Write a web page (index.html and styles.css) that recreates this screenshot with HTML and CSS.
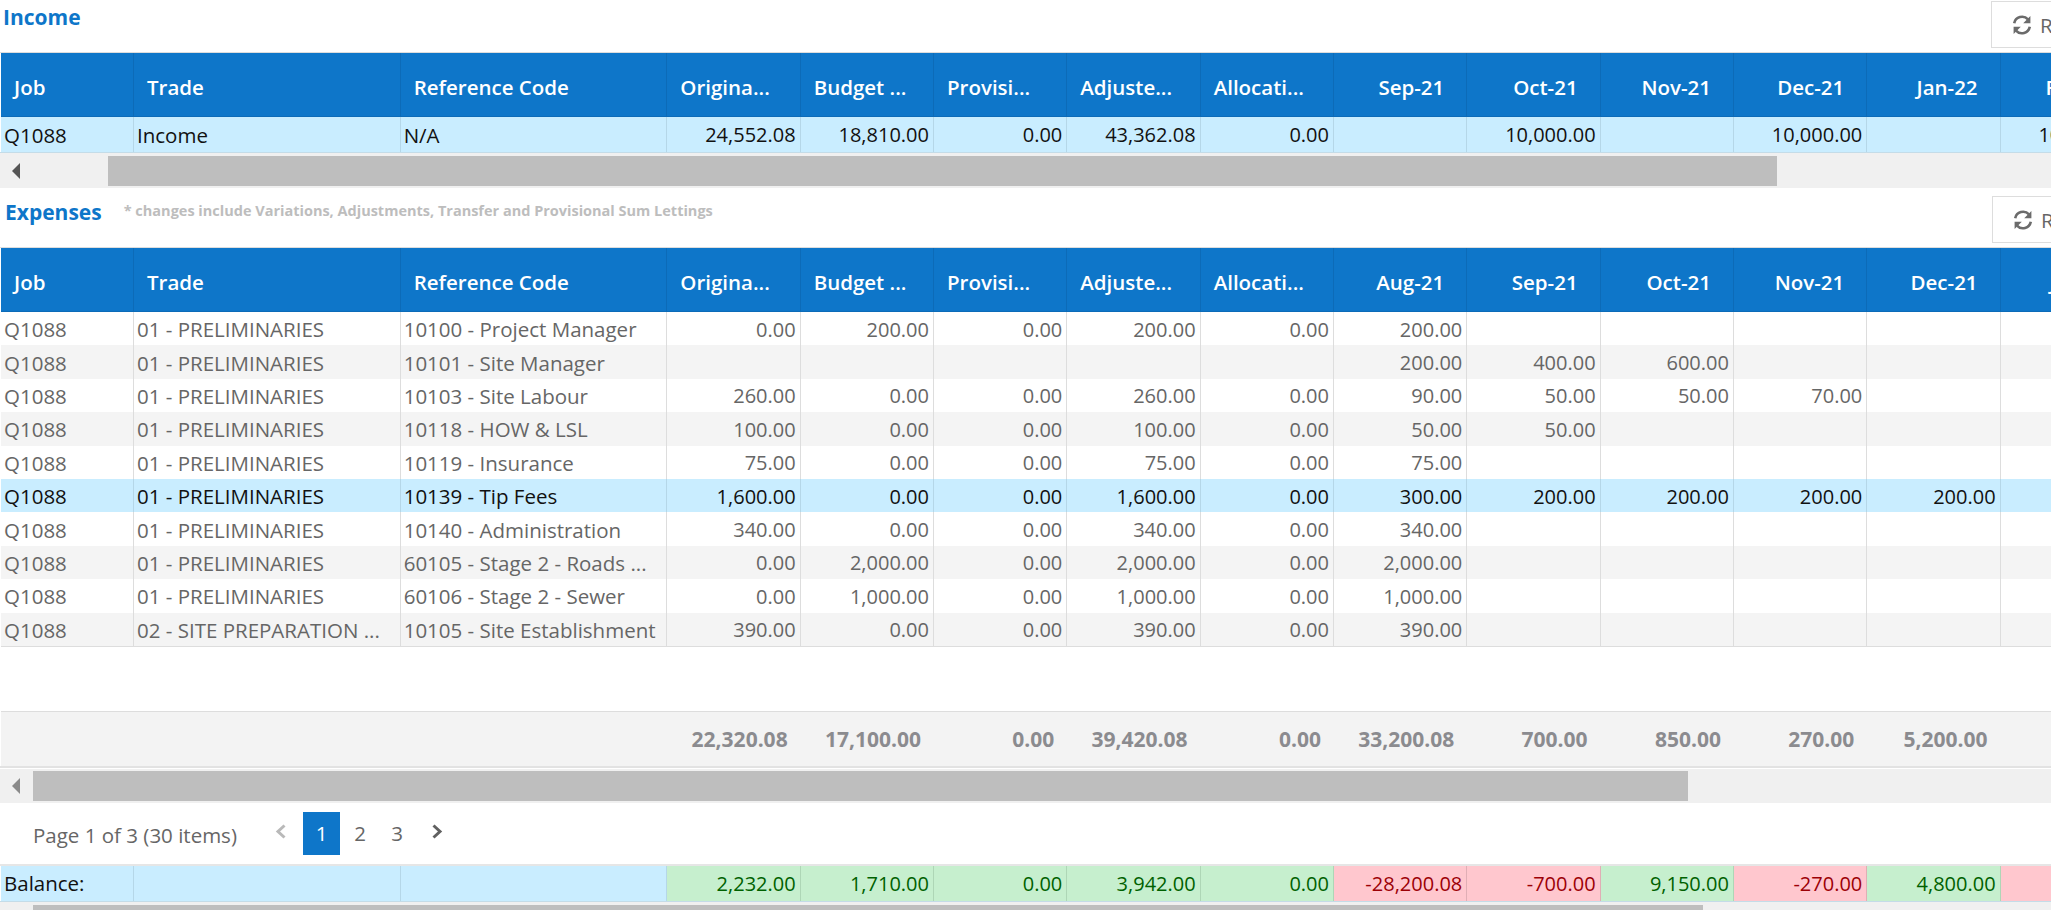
FILE: index.html
```html
<!DOCTYPE html>
<html lang="en">
<head>
<meta charset="utf-8">
<title>Income and Expenses</title>
<link rel="stylesheet" href="styles.css">
</head>
<body>
<section class="panel-head income-head">
  <h2 class="title">Income</h2>
  <button class="refresh" type="button"><svg class="refresh-icon" viewBox="0 0 20 20"><path d="M2.2 8.2A8 8 0 0 1 16 4.4M17.8 11.8A8 8 0 0 1 4 15.6" fill="none" stroke="#6b6b6b" stroke-width="2.6"/><path d="M18.4 1v7.2h-7.2zM1.6 19v-7.2h7.2z" fill="#6b6b6b"/></svg>Refresh</button>
</section>
<div class="grid income-grid">
  <div class="row head">
    <div class="c">Job</div><div class="c">Trade</div><div class="c">Reference Code</div>
    <div class="c">Origina...</div><div class="c">Budget ...</div><div class="c">Provisi...</div><div class="c">Adjuste...</div><div class="c">Allocati...</div>
    <div class="c m">Sep-21</div><div class="c m">Oct-21</div><div class="c m">Nov-21</div><div class="c m">Dec-21</div><div class="c m">Jan-22</div><div class="c m">Feb-22</div>
  </div>
  <div class="row sel tall">
    <div class="c">Q1088</div><div class="c">Income</div><div class="c">N/A</div>
    <div class="c n">24,552.08</div><div class="c n">18,810.00</div><div class="c n">0.00</div><div class="c n">43,362.08</div><div class="c n">0.00</div>
    <div class="c n"></div><div class="c n">10,000.00</div><div class="c n"></div><div class="c n">10,000.00</div><div class="c n"></div><div class="c n">10,000.00</div>
  </div>
</div>
<div class="track track-income"><svg class="arrow" viewBox="0 0 8 16"><path d="M8 0v16L0 8z" fill="#555"/></svg><div class="thumb thumb-income"></div></div>

<section class="panel-head expense-head">
  <h2 class="title">Expenses</h2>
  <p class="note">* changes include Variations, Adjustments, Transfer and Provisional Sum Lettings</p>
  <button class="refresh" type="button"><svg class="refresh-icon" viewBox="0 0 20 20"><path d="M2.2 8.2A8 8 0 0 1 16 4.4M17.8 11.8A8 8 0 0 1 4 15.6" fill="none" stroke="#6b6b6b" stroke-width="2.6"/><path d="M18.4 1v7.2h-7.2zM1.6 19v-7.2h7.2z" fill="#6b6b6b"/></svg>Refresh</button>
</section>
<div class="grid expense-grid">
  <div class="row head">
    <div class="c">Job</div><div class="c">Trade</div><div class="c">Reference Code</div>
    <div class="c">Origina...</div><div class="c">Budget ...</div><div class="c">Provisi...</div><div class="c">Adjuste...</div><div class="c">Allocati...</div>
    <div class="c m">Aug-21</div><div class="c m">Sep-21</div><div class="c m">Oct-21</div><div class="c m">Nov-21</div><div class="c m">Dec-21</div><div class="c m">Jan-22</div>
  </div>
  <div class="row body">
    <div class="c">Q1088</div><div class="c">01 - PRELIMINARIES</div><div class="c">10100 - Project Manager</div>
    <div class="c n">0.00</div><div class="c n">200.00</div><div class="c n">0.00</div><div class="c n">200.00</div><div class="c n">0.00</div>
    <div class="c n">200.00</div><div class="c n"></div><div class="c n"></div><div class="c n"></div><div class="c n"></div><div class="c n"></div>
  </div>
  <div class="row body alt">
    <div class="c">Q1088</div><div class="c">01 - PRELIMINARIES</div><div class="c">10101 - Site Manager</div>
    <div class="c n"></div><div class="c n"></div><div class="c n"></div><div class="c n"></div><div class="c n"></div>
    <div class="c n">200.00</div><div class="c n">400.00</div><div class="c n">600.00</div><div class="c n"></div><div class="c n"></div><div class="c n"></div>
  </div>
  <div class="row body">
    <div class="c">Q1088</div><div class="c">01 - PRELIMINARIES</div><div class="c">10103 - Site Labour</div>
    <div class="c n">260.00</div><div class="c n">0.00</div><div class="c n">0.00</div><div class="c n">260.00</div><div class="c n">0.00</div>
    <div class="c n">90.00</div><div class="c n">50.00</div><div class="c n">50.00</div><div class="c n">70.00</div><div class="c n"></div><div class="c n"></div>
  </div>
  <div class="row body alt">
    <div class="c">Q1088</div><div class="c">01 - PRELIMINARIES</div><div class="c">10118 - HOW &amp; LSL</div>
    <div class="c n">100.00</div><div class="c n">0.00</div><div class="c n">0.00</div><div class="c n">100.00</div><div class="c n">0.00</div>
    <div class="c n">50.00</div><div class="c n">50.00</div><div class="c n"></div><div class="c n"></div><div class="c n"></div><div class="c n"></div>
  </div>
  <div class="row body">
    <div class="c">Q1088</div><div class="c">01 - PRELIMINARIES</div><div class="c">10119 - Insurance</div>
    <div class="c n">75.00</div><div class="c n">0.00</div><div class="c n">0.00</div><div class="c n">75.00</div><div class="c n">0.00</div>
    <div class="c n">75.00</div><div class="c n"></div><div class="c n"></div><div class="c n"></div><div class="c n"></div><div class="c n"></div>
  </div>
  <div class="row body sel">
    <div class="c">Q1088</div><div class="c">01 - PRELIMINARIES</div><div class="c">10139 - Tip Fees</div>
    <div class="c n">1,600.00</div><div class="c n">0.00</div><div class="c n">0.00</div><div class="c n">1,600.00</div><div class="c n">0.00</div>
    <div class="c n">300.00</div><div class="c n">200.00</div><div class="c n">200.00</div><div class="c n">200.00</div><div class="c n">200.00</div><div class="c n"></div>
  </div>
  <div class="row body">
    <div class="c">Q1088</div><div class="c">01 - PRELIMINARIES</div><div class="c">10140 - Administration</div>
    <div class="c n">340.00</div><div class="c n">0.00</div><div class="c n">0.00</div><div class="c n">340.00</div><div class="c n">0.00</div>
    <div class="c n">340.00</div><div class="c n"></div><div class="c n"></div><div class="c n"></div><div class="c n"></div><div class="c n"></div>
  </div>
  <div class="row body alt">
    <div class="c">Q1088</div><div class="c">01 - PRELIMINARIES</div><div class="c">60105 - Stage 2 - Roads ...</div>
    <div class="c n">0.00</div><div class="c n">2,000.00</div><div class="c n">0.00</div><div class="c n">2,000.00</div><div class="c n">0.00</div>
    <div class="c n">2,000.00</div><div class="c n"></div><div class="c n"></div><div class="c n"></div><div class="c n"></div><div class="c n"></div>
  </div>
  <div class="row body">
    <div class="c">Q1088</div><div class="c">01 - PRELIMINARIES</div><div class="c">60106 - Stage 2 - Sewer</div>
    <div class="c n">0.00</div><div class="c n">1,000.00</div><div class="c n">0.00</div><div class="c n">1,000.00</div><div class="c n">0.00</div>
    <div class="c n">1,000.00</div><div class="c n"></div><div class="c n"></div><div class="c n"></div><div class="c n"></div><div class="c n"></div>
  </div>
  <div class="row body alt">
    <div class="c">Q1088</div><div class="c">02 - SITE PREPARATION ...</div><div class="c">10105 - Site Establishment</div>
    <div class="c n">390.00</div><div class="c n">0.00</div><div class="c n">0.00</div><div class="c n">390.00</div><div class="c n">0.00</div>
    <div class="c n">390.00</div><div class="c n"></div><div class="c n"></div><div class="c n"></div><div class="c n"></div><div class="c n"></div>
  </div>
  <div class="empty"></div>
  <div class="row foot">
    <div class="c"></div><div class="c"></div><div class="c"></div>
    <div class="c n">22,320.08</div><div class="c n">17,100.00</div><div class="c n">0.00</div><div class="c n">39,420.08</div><div class="c n">0.00</div>
    <div class="c n">33,200.08</div><div class="c n">700.00</div><div class="c n">850.00</div><div class="c n">270.00</div><div class="c n">5,200.00</div><div class="c n"></div>
  </div>
</div>
<div class="track track-expense"><svg class="arrow" viewBox="0 0 8 16"><path d="M8 0v16L0 8z" fill="#8a8a8a"/></svg><div class="thumb thumb-expense"></div></div>

<nav class="pager">
  <span class="page-info">Page 1 of 3 (30 items)</span>
  <svg class="chev chev-prev" viewBox="0 0 11 15"><path d="M9.5 1.5 3 7.5l6.5 6" fill="none" stroke="#b9b9b9" stroke-width="3"/></svg>
  <span class="page current">1</span><span class="page">2</span><span class="page">3</span>
  <svg class="chev chev-next" viewBox="0 0 11 15"><path d="M1.5 1.5 8 7.5l-6.5 6" fill="none" stroke="#616161" stroke-width="3"/></svg>
</nav>

<div class="grid balance-grid">
  <div class="row sel tall balance">
    <div class="c">Balance:</div><div class="c"></div><div class="c"></div>
    <div class="c n good">2,232.00</div><div class="c n good">1,710.00</div><div class="c n good">0.00</div><div class="c n good">3,942.00</div><div class="c n good">0.00</div>
    <div class="c n bad">-28,200.08</div><div class="c n bad">-700.00</div><div class="c n good">9,150.00</div><div class="c n bad">-270.00</div><div class="c n good">4,800.00</div><div class="c n bad"></div>
  </div>
</div>
<div class="track track-balance"><div class="thumb thumb-balance"></div></div>
</body>
</html>
```
FILE: styles.css
```css
* { box-sizing: border-box; }
html, body { margin: 0; height: 911px; overflow: hidden; background: #fff; }
body { width: 2051px; font-family: "Open Sans", "Noto Sans", sans-serif; font-size: 20.5px; color: #666; }

.panel-head { display: flex; align-items: flex-start; overflow: hidden; }
.income-head { height: 52px; padding-top: 1px; }
.expense-head { height: 59px; padding-top: 8px; }
.title { margin: 0; font-size: 21px; font-weight: 700; color: #0e76c9; line-height: 26px; }
.income-head .title { margin: 3px 0 0 3px; }
.expense-head .title { margin: 3px 0 0 5px; }
.note { margin: 5px 0 0 22px; font-size: 14.5px; font-weight: 700; color: #bdbdbd; line-height: 20px; white-space: nowrap; }
.refresh {
  flex: none; display: flex; align-items: center; gap: 8px; margin-left: auto; margin-right: -60px;
  width: 120px; height: 47px; padding: 0 0 0 20px; background: #fff; border: 1px solid #ddd;
  font: inherit; color: #666;
}
.expense-head .refresh { margin-right: -61px; }
.refresh-icon { width: 20px; height: 20px; flex: none; }

.grid { overflow: hidden; border-top: 1px solid #ddd; padding-left: 1px; }
.row { display: grid; grid-template-columns: 133px 266.67px 266.67px repeat(11, 133.33px); width: 2200px; }
.c { border-right: 1px solid #ddd; padding: 1px 3px 0; white-space: nowrap; overflow: hidden; display: flex; align-items: center; }
.n { justify-content: flex-end; font-size: 20px; padding-right: 4px; }

.head { height: 64px; background: #0e76c9; color: #fff; font-weight: 600; border-bottom: 1px solid #0c6bb8; font-size: 20.5px; }
.head .c { border-right-color: #0c6bb8; padding: 5px 13px 0; }
.head .m { justify-content: flex-end; padding-right: 22px; }

.body { height: 33.4px; }
.alt { background: #f4f4f4; }
.sel { background: #c9edff; color: #111; }
.sel .c { border-right-color: #b5d7e8; }
.tall { height: 35px; }
.tall .c { padding-top: 0; }
.income-grid { border-bottom: 1px solid #c4dce8; }
.expense-grid { border-bottom: 2px solid #e2e2e2; }

.empty { height: 66px; border-top: 1px solid #ddd; border-bottom: 1px solid #ddd; }
.foot { height: 54px; background: #f3f3f3; font-weight: 700; color: #8b8b8f; }
.foot .c { border-right: 0; padding-right: 13px; padding-top: 0; font-size: 21px; }

.track { background: #f0f0f0; display: flex; align-items: center; position: relative; }
.track-income { height: 35px; }
.track-expense { height: 34px; margin-top: 1px; }
.track-balance { height: 8px; align-items: flex-start; padding-top: 3px; }
.arrow { position: absolute; left: 12px; width: 8px; height: 16px; }
.thumb { height: 30px; background: #bebebe; }
.thumb-income { margin-left: 108px; width: 1669px; }
.thumb-expense { margin-left: 33px; width: 1655px; }
.thumb-balance { margin-left: 33px; width: 1670px; height: 5px; }

.pager { height: 61px; display: flex; align-items: flex-start; padding: 9px 0 0 33px; font-size: 20.5px; }
.page-info { width: 242px; line-height: 43px; padding-top: 2px; }
.chev { width: 11px; height: 15px; flex: none; margin-top: 12px; }
.chev-prev { margin-right: 17px; }
.chev-next { margin-left: 18px; }
.page { width: 37px; height: 43px; display: flex; align-items: center; justify-content: center; color: #666; padding-left: 3px; }
.current { background: #0e76c9; color: #fff; padding-left: 0; }

.balance-grid { border-top: 2px solid #e6e6e6; border-bottom: 1px solid #c4dce8; }
.balance .good { background: #c6efce; color: #006100; border-right-color: #aed6b6; }
.balance .bad { background: #ffc7ce; color: #9c0006; border-right-color: #e0aeb5; }
```
